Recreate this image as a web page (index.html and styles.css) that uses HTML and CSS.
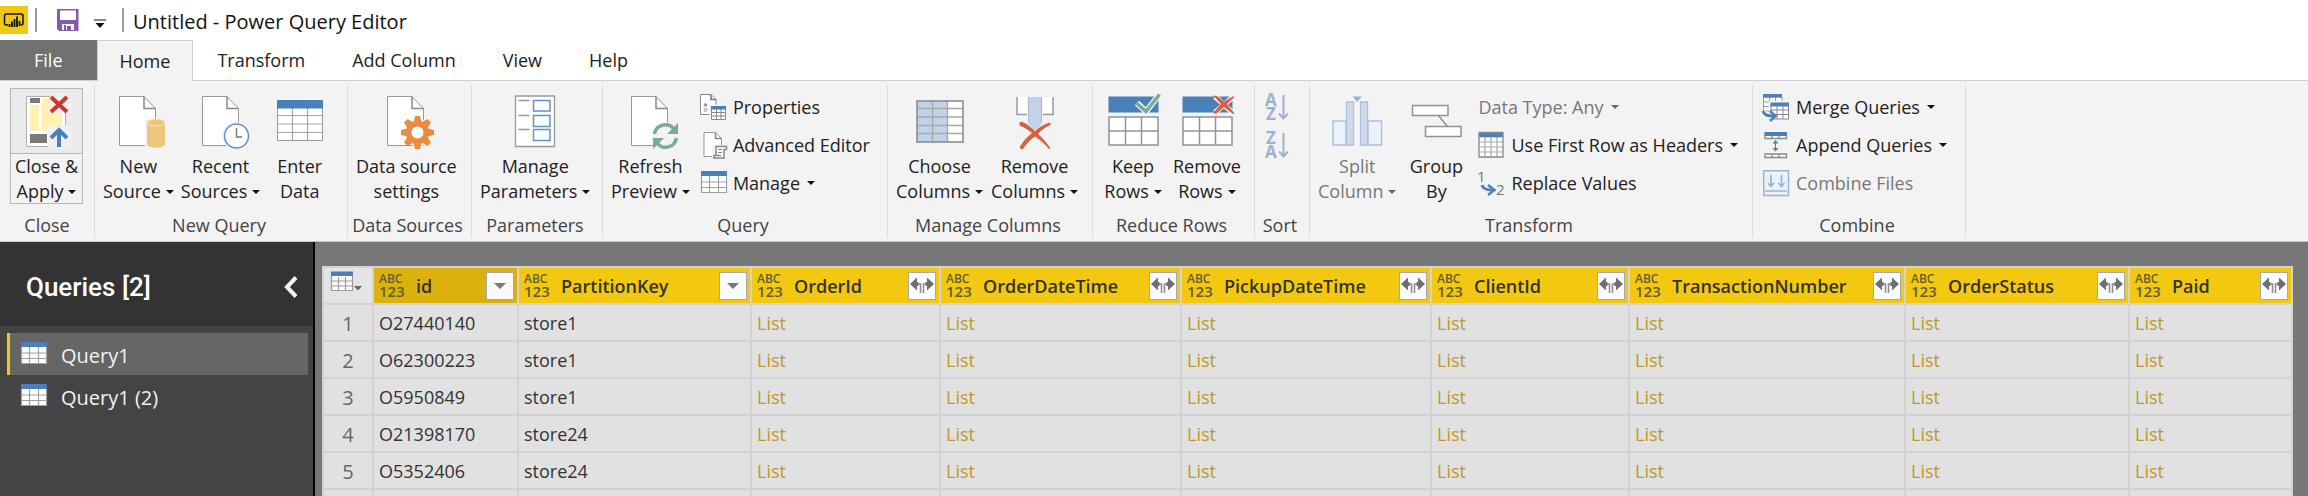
FILE: index.html
```html
<!DOCTYPE html>
<html lang="en">
<head>
<meta charset="utf-8">
<title>Untitled - Power Query Editor</title>
<link rel="stylesheet" href="styles.css">
</head>
<body>
<svg class="defs" width="0" height="0" aria-hidden="true">
  <symbol id="doc" viewBox="0 0 56 56">
    <path d="M9.500 3.500H34L45.500 15.500V52.500H9.500Z" fill="#fff" stroke="#999"/>
    <path d="M34 3.500V15.500H45.500" fill="none" stroke="#888" stroke-width="1.500"/>
  </symbol>
  <symbol id="grid" viewBox="0 0 28 28">
    <path d="M1 3H27V24H1Z" fill="#fff"/>
    <path d="M1.500 6V23.500H26.500V6M1 13H27M1 18.500H27M9.500 7V24M18.500 7V24" fill="none" stroke="#a0a0a0" stroke-width="1.200"/>
    <path d="M1 2H27V7H1Z" fill="#4a80ba"/>
  </symbol>
  <symbol id="expand" viewBox="0 0 26 26">
    <path d="M1 11L8 4.500V9H9.500V13H8V17.500ZM25 11L18 4.500V9H16.500V13H18V17.500Z" fill="#6f6f6f"/>
    <path d="M9 11H11.500V20M17 11H14.500V20" fill="none" stroke="#8a8a8a" stroke-width="1.500"/>
  </symbol>
</svg>

<header class="titlebar">
  <svg class="logo" width="28" height="28" viewBox="0 0 28 28"><path d="M0 0H28V28H0Z" fill="#f2c811"/><path d="M8 19H6.500A2 2 0 0 1 4.500 17V10A2 2 0 0 1 6.500 8H21A2 2 0 0 1 23 10V17A2 2 0 0 1 21 19H20.500" fill="none" stroke="#111" stroke-width="1.500"/><path d="M9.500 18V21M12 15.500V21M14.500 13V21M17 10.500V21M19.500 15V20" stroke="#111" stroke-width="1.800"/></svg>
  <span class="bar"></span>
  <button class="quick save" aria-label="Save"><svg width="24" height="24" viewBox="0 0 24 24"><path d="M1.500 1H22.500V23H3L1 21V1Z" fill="#8858ab"/><path d="M4 2.500H20V12H4Z" fill="#fff"/><path d="M6 16H18V22H15V18H11V22H6Z" fill="#fff"/><path d="M8 17H10V22H8Z" fill="#8858ab"/></svg></button>
  <button class="quick more" aria-label="Customize toolbar"><svg width="12" height="10" viewBox="0 0 12 10"><path d="M0 0.500H12V1.500H0ZM1.500 4H10.500L6 9Z" fill="#111"/></svg></button>
  <span class="bar"></span>
  <h1 class="title">Untitled - Power Query Editor</h1>
</header>

<nav class="tabs">
  <button class="tab file">File</button>
  <button class="tab active">Home</button>
  <button class="tab">Transform</button>
  <button class="tab">Add Column</button>
  <button class="tab">View</button>
  <button class="tab">Help</button>
</nav>

<section class="ribbon">
  <div class="group g-close">
    <div class="tools">
      <button class="big split">
        <span class="pic"><svg width="56" height="56" viewBox="0 0 56 56"><path d="M7.500 3.500H46.500V53.500H7.500Z" fill="#fff" stroke="#b0b0b0"/><path d="M11 12H20V38H11ZM23 5H34V19H43V32L36 38H23Z" fill="#fff0b3"/><path d="M11 5H21V10H11ZM11 41H28V50H11Z" fill="#7a7a7a"/><path d="M31 0H54V20H31ZM29 32H54V56H29Z" fill="#f0f0f0" opacity=".9"/><path d="M32 4L48 19M48 4L32 19" stroke="#cf3434" stroke-width="4"/><path d="M40 54V38M32 45L40 37L48 45" fill="none" stroke="#4a80ba" stroke-width="4"/></svg></span>
        <span class="cap">Close &amp;<br>Apply<i class="dd"></i></span>
      </button>
    </div>
    <div class="name">Close</div>
  </div>

  <div class="group g-new">
    <div class="tools">
      <button class="big">
        <svg width="56" height="56" viewBox="0 0 56 56"><use href="#doc"/><path d="M35 27H56V56H35Z" fill="#f3f3f3"/><path d="M37 30V51C37 56 55 56 55 51V30Z" fill="#eec77e"/><ellipse cx="46" cy="29.500" rx="9" ry="3.500" fill="#eec77e" stroke="#f8e6c4"/></svg>
        <span class="cap">New<br>Source<i class="dd"></i></span>
      </button>
      <button class="big">
        <svg width="56" height="56" viewBox="0 0 56 56"><use href="#doc"/><circle cx="43.500" cy="43" r="14" fill="#f3f3f3"/><circle cx="43.500" cy="43" r="12" fill="#fff" stroke="#5f93c8" stroke-width="1.500"/><path d="M43.500 35V44H49" fill="none" stroke="#777" stroke-width="1.500"/></svg>
        <span class="cap">Recent<br>Sources<i class="dd"></i></span>
      </button>
      <button class="big">
        <svg width="56" height="56" viewBox="0 0 56 56"><path d="M5.500 8.500H50.500V47.500H5.500Z" fill="#fff" stroke="#999"/><path d="M5 22.500H51M5 31H51M5 39.500H51M20.500 15V48M35.500 15V48" stroke="#a5a5a5" stroke-width="1.200"/><path d="M5 7H51V15.500H5Z" fill="#4a80ba"/></svg>
        <span class="cap">Enter<br>Data</span>
      </button>
    </div>
    <div class="name">New Query</div>
  </div>

  <div class="group g-data">
    <div class="tools">
      <button class="big">
        <svg width="56" height="56" viewBox="0 0 56 56"><use href="#doc"/><circle cx="39.500" cy="39.500" r="14" fill="#f3f3f3"/><g fill="#e78c42" transform="translate(39.500 39.500)"><path d="M-4-10L-2.500-16.500H2.500L4-10V10L2.500 16.500H-2.500L-4 10Z"/><path d="M-4-10L-2.500-16.500H2.500L4-10V10L2.500 16.500H-2.500L-4 10Z" transform="rotate(45)"/><path d="M-4-10L-2.500-16.500H2.500L4-10V10L2.500 16.500H-2.500L-4 10Z" transform="rotate(90)"/><path d="M-4-10L-2.500-16.500H2.500L4-10V10L2.500 16.500H-2.500L-4 10Z" transform="rotate(135)"/><circle r="11.500"/><circle r="6" fill="#fff"/></g></svg>
        <span class="cap">Data source<br>settings</span>
      </button>
    </div>
    <div class="name">Data Sources</div>
  </div>

  <div class="group g-param">
    <div class="tools">
      <button class="big">
        <svg width="56" height="56" viewBox="0 0 56 56"><path d="M8.500 3H47.500V53.500H8.500Z" fill="#fff" stroke="#999" stroke-width="1.300"/><path d="M11.500 7.500H22.500M11.500 22.500H22.500M11.500 36.500H22.500" stroke="#999" stroke-width="1.300"/><path d="M26.500 7.500H43V18H26.500ZM26.500 22.500H43V33.500H26.500ZM26.500 36.500H43V47.500H26.500Z" fill="#fff" stroke="#5f93c8" stroke-width="1.500"/></svg>
        <span class="cap">Manage<br>Parameters<i class="dd"></i></span>
      </button>
    </div>
    <div class="name">Parameters</div>
  </div>

  <div class="group g-query">
    <div class="tools">
      <button class="big">
        <svg width="56" height="56" viewBox="0 0 56 56"><use href="#doc"/><circle cx="43.500" cy="43" r="14" fill="#f3f3f3"/><path d="M32.500 41A11 11 0 0 1 52 36M54.500 45A11 11 0 0 1 35 50" fill="none" stroke="#79aa97" stroke-width="3.500"/><path d="M56 30V41H45ZM31 56V45H42Z" fill="#79aa97"/></svg>
        <span class="cap">Refresh<br>Preview<i class="dd"></i></span>
      </button>
      <div class="stack">
        <button class="small"><svg width="28" height="28" viewBox="0 0 28 28"><path d="M.5 1.500H11L16 6.500V21.500H.5Z" fill="#fff" stroke="#888"/><path d="M11 1.500V6.500H16" fill="none" stroke="#777" stroke-width="1.500"/><circle cx="5.500" cy="12" r="1.800" fill="#999"/><circle cx="5.500" cy="17" r="1.500" fill="#fff" stroke="#999"/><path d="M9.500 11.500H27.500V28H9.500Z" fill="#f3f3f3"/><path d="M11.500 16V26.500H25.500V16M11 19.500H26M11 23H26M16.500 16V27M21 16V27" fill="#fff" stroke="#888"/><path d="M11 13H26V16.500H11Z" fill="#4a80ba"/></svg>Properties</button>
        <button class="small"><svg width="28" height="28" viewBox="0 0 28 28"><path d="M4 1.500H15.500L21.500 7.500V25.500H4Z" fill="#fff" stroke="#999"/><path d="M15.500 1.500V7.500H21.500" fill="none" stroke="#888" stroke-width="1.500"/><path d="M12 14H28V28H12Z" fill="#f3f3f3"/><path d="M16 25V15.500H26.500V18.500H24V27H14V24.500H21" fill="#fff" stroke="#888" stroke-width="1.500"/><path d="M18 18.500H22M18 21.500H22" stroke="#888"/></svg>Advanced Editor</button>
        <button class="small"><svg width="28" height="28"><use href="#grid"/></svg>Manage<i class="dd"></i></button>
      </div>
    </div>
    <div class="name">Query</div>
  </div>

  <div class="group g-cols">
    <div class="tools">
      <button class="big">
        <svg width="56" height="56" viewBox="0 0 56 56"><path d="M5 8H51V49H5Z" fill="#fff"/><path d="M5 8H35.500V49H5Z" fill="#c0d3e8"/><path d="M5 15.500H51M5 24H51M5 32.500H51M5 40.500H51M20.500 8V49M35.500 8V49" stroke="#a8a8a8" stroke-width="1.300"/><path d="M5 8H51V49H5Z" fill="none" stroke="#888" stroke-width="1.500"/></svg>
        <span class="cap">Choose<br>Columns<i class="dd"></i></span>
      </button>
      <button class="big">
        <svg width="56" height="56" viewBox="0 0 56 56"><path d="M10 4V21.500H20V4M46 4V21.500H36V4" fill="#fff"/><path d="M10 4V21.500H20M46 4V21.500H36" fill="none" stroke="#999" stroke-width="1.500"/><path d="M21.500 4H34.500V31L28 37L21.500 31Z" fill="#c0d3e8"/><path d="M21.500 4V29M34.500 4V29" stroke="#b0b8c2"/><path d="M14 28.500C19 30 24 34 28 38C33 33 38 31 43 29.500L44 31.500C39 34 34 37 31 41C36 45 40 50 43.500 55.500L42 56C38 51 33 47 28 43.500C23 47 19 51 16 56C13 57 12 54 14 52C17 47 21 43 25 40C21 37 17 34 13 33C12 31 12 29 14 28.500Z" fill="#da6043"/></svg>
        <span class="cap">Remove<br>Columns<i class="dd"></i></span>
      </button>
    </div>
    <div class="name">Manage Columns</div>
  </div>

  <div class="group g-rows">
    <div class="tools">
      <button class="big">
        <svg width="56" height="56" viewBox="0 0 56 56"><path d="M3.500 3.500H53.500V19.500H3.500Z" fill="#4a80ba"/><path d="M4 24H53V52H4ZM4 38H53M20.500 24V52M36.500 24V52" fill="#fff" stroke="#929292" stroke-width="1.500"/><path d="M32 10L41 18.500L54 2" fill="none" stroke="#f3f3f3" stroke-width="6"/><path d="M32 10.500L41 18.500L54.500 1.500" fill="none" stroke="#79aa97" stroke-width="3.500"/></svg>
        <span class="cap">Keep<br>Rows<i class="dd"></i></span>
      </button>
      <button class="big">
        <svg width="56" height="56" viewBox="0 0 56 56"><path d="M3.500 3.500H53.500V19.500H3.500Z" fill="#4a80ba"/><path d="M4 24H53V52H4ZM4 38H53M20.500 24V52M36.500 24V52" fill="#fff" stroke="#929292" stroke-width="1.500"/><path d="M36 3.500L54 20M54 4L36 19.500" stroke="#f3f3f3" stroke-width="5.500"/><path d="M34 2.500L38 3L45 8.500L54.500 3L55 4.500L48 11L55.500 20.500L54 21L45 14L37 21L34 20L42 11Z" fill="#da6043"/></svg>
        <span class="cap">Remove<br>Rows<i class="dd"></i></span>
      </button>
    </div>
    <div class="name">Reduce Rows</div>
  </div>

  <div class="group g-sort">
    <div class="tools">
      <div class="stack">
        <button class="small" disabled aria-label="Sort ascending"><svg class="az" width="28" height="28" viewBox="0 0 28 28"><text x="0" y="13">A</text><text x="1" y="27">Z</text><path d="M18.500 2V25M14 20.500L18.500 25.500L23 20.500" fill="none" stroke="#9fb0d0" stroke-width="2"/></svg></button>
        <button class="small" disabled aria-label="Sort descending"><svg class="az" width="28" height="28" viewBox="0 0 28 28"><text x="1" y="13">Z</text><text x="0" y="27">A</text><path d="M18.500 2V25M14 20.500L18.500 25.500L23 20.500" fill="none" stroke="#9fb0d0" stroke-width="2"/></svg></button>
      </div>
    </div>
    <div class="name">Sort</div>
  </div>

  <div class="group g-trans">
    <div class="tools">
      <button class="big" disabled>
        <svg width="56" height="56" viewBox="0 0 56 56"><path d="M4 28H17V52H4ZM39 28H52.500V52H39Z" fill="#eaf2ff" stroke="#b0c1dc" stroke-width="1.500"/><path d="M17.500 9H24.500V52H17.500ZM31.500 9H38.500V52H31.500Z" fill="#cfdaea" stroke="#b0c1dc" stroke-width="1.300"/><path d="M23.500 3.500H33L28 9Z" fill="#9fb0d0"/></svg>
        <span class="cap">Split<br>Column<i class="dd"></i></span>
      </button>
      <button class="big">
        <svg width="56" height="56" viewBox="0 0 56 56"><path d="M30 22L39.500 33.500" stroke="#888" stroke-width="1.300"/><path d="M4.500 12.500H40V22.500H4.500ZM17.500 33.500H53V43.500H17.500Z" fill="#fff" stroke="#929292" stroke-width="1.500"/></svg>
        <span class="cap">Group<br>By</span>
      </button>
      <div class="stack">
        <button class="small" disabled>Data Type: Any<i class="dd"></i></button>
        <button class="small"><svg width="28" height="28" viewBox="0 0 28 28"><path d="M1 2H25V26H1Z" fill="#fff"/><path d="M1 6H25M1 11H25M1 16H25M1 21H25M7 2V26M13 2V26M19 2V26" stroke="#aaa" stroke-width="1.200"/><path d="M1 1.500H25V6H1Z" fill="#4a80ba"/><path d="M1 1.500H25V26H1Z" fill="none" stroke="#888" stroke-width="1.300"/></svg>Use First Row as Headers<i class="dd"></i></button>
        <button class="small"><svg class="num" width="28" height="28" viewBox="0 0 28 28"><text x="-1" y="13">1</text><text x="18" y="26">2</text><path d="M4 16C5 20 8 21 14 21" fill="none" stroke="#4a80ba" stroke-width="3"/><path d="M10 16L16.500 21L10 26" fill="none" stroke="#4a80ba" stroke-width="2.500"/></svg>Replace Values</button>
      </div>
    </div>
    <div class="name">Transform</div>
  </div>

  <div class="group g-comb">
    <div class="tools">
      <div class="stack">
        <button class="small"><svg width="28" height="28" viewBox="0 0 28 28"><path d="M.5 4H19V18H.5ZM.5 9H19M.5 13.500H19M6.500 4V18M12.500 4V18" fill="#fff" stroke="#999"/><path d="M0 1H19V4.500H0Z" fill="#4a80ba"/><path d="M6 8H28V28H6Z" fill="#f3f3f3"/><path d="M8 11H25.500V26H8ZM8 17H25.500M8 21.500H25.500M14 11V26M20 11V26" fill="#fff" stroke="#888"/><path d="M7.500 9.500H26V13.500H7.500Z" fill="#4a80ba"/><path d="M0 18C1 22 4 23 10 23" fill="none" stroke="#f3f3f3" stroke-width="6"/><path d="M0 18C1 22 4 23 11 23" fill="none" stroke="#4a80ba" stroke-width="3"/><path d="M7 18L12.500 23L7 28" fill="none" stroke="#4a80ba" stroke-width="2.500"/></svg>Merge Queries<i class="dd"></i></button>
        <button class="small"><svg width="28" height="28" viewBox="0 0 28 28"><path d="M2 4H23.500V7.500H2ZM2 23H23.500V26.500H2ZM9 4V7.500M16 4V7.500M9 23V26.500M16 23V26.500" fill="#fff" stroke="#888" stroke-width="1.300"/><path d="M1.500 1H24V5H1.500Z" fill="#4a80ba"/><path d="M12.500 9L15.500 12.500H13V17H15.500L12.500 20.500L9.500 17H12V12.500H9.500Z" fill="#4a80ba"/></svg>Append Queries<i class="dd"></i></button>
        <button class="small" disabled><svg width="28" height="28" viewBox="0 0 28 28"><path d="M.7 1.700H25.500V26.500H.7Z" fill="#e9f1fd" stroke="#9fb0d0" stroke-width="1.500"/><path d="M2 22H24M8 6V17M5 14L8 17.500L11 14M18.500 6V17M15.500 14L18.500 17.500L21.500 14" fill="none" stroke="#9fb0d0" stroke-width="1.700"/></svg>Combine Files</button>
      </div>
    </div>
    <div class="name">Combine</div>
  </div>
</section>

<main class="work">
  <aside class="side">
    <div class="side-head">
      <h2>Queries [2]</h2>
      <button aria-label="Collapse queries pane"><svg width="14" height="22" viewBox="0 0 14 22"><path d="M12 1.500L3 11L12 20.500" fill="none" stroke="#f3f3f3" stroke-width="4"/></svg></button>
    </div>
    <div class="list">
      <button class="query selected"><svg width="28" height="28"><use href="#grid"/></svg><span>Query1</span></button>
      <button class="query"><svg width="28" height="28"><use href="#grid"/></svg><span>Query1 (2)</span></button>
    </div>
  </aside>

  <div class="sheet">
    <table>
      <colgroup><col class="c0"><col class="c1"><col class="c2"><col class="c3"><col class="c4"><col class="c5"><col class="c6"><col class="c7"><col class="c8"><col class="c9"></colgroup>
      <thead>
        <tr>
          <th class="corner"><button aria-label="Table options"><svg width="34" height="28" viewBox="0 0 34 28"><path d="M2 4H24V22H2Z" fill="#fff"/><path d="M2.500 6V21.500H23.500V6M2 12H24M2 17H24M9.500 8V22M16.500 8V22" fill="none" stroke="#999" stroke-width="1.200"/><path d="M2 2.500H24V7H2Z" fill="#4a80ba"/><path d="M25 17H33L29 21.500Z" fill="#666"/></svg></button></th>
          <th class="picked"><div class="head"><span class="type">ABC<b>123</b></span><span class="label">id</span><button aria-label="Filter id"><i class="dd"></i></button></div></th>
          <th><div class="head"><span class="type">ABC<b>123</b></span><span class="label">PartitionKey</span><button aria-label="Filter PartitionKey"><i class="dd"></i></button></div></th>
          <th><div class="head"><span class="type">ABC<b>123</b></span><span class="label">OrderId</span><button aria-label="Expand OrderId"><svg width="26" height="26"><use href="#expand"/></svg></button></div></th>
          <th><div class="head"><span class="type">ABC<b>123</b></span><span class="label">OrderDateTime</span><button aria-label="Expand OrderDateTime"><svg width="26" height="26"><use href="#expand"/></svg></button></div></th>
          <th><div class="head"><span class="type">ABC<b>123</b></span><span class="label">PickupDateTime</span><button aria-label="Expand PickupDateTime"><svg width="26" height="26"><use href="#expand"/></svg></button></div></th>
          <th><div class="head"><span class="type">ABC<b>123</b></span><span class="label">ClientId</span><button aria-label="Expand ClientId"><svg width="26" height="26"><use href="#expand"/></svg></button></div></th>
          <th><div class="head"><span class="type">ABC<b>123</b></span><span class="label">TransactionNumber</span><button aria-label="Expand TransactionNumber"><svg width="26" height="26"><use href="#expand"/></svg></button></div></th>
          <th><div class="head"><span class="type">ABC<b>123</b></span><span class="label">OrderStatus</span><button aria-label="Expand OrderStatus"><svg width="26" height="26"><use href="#expand"/></svg></button></div></th>
          <th><div class="head"><span class="type">ABC<b>123</b></span><span class="label">Paid</span><button aria-label="Expand Paid"><svg width="26" height="26"><use href="#expand"/></svg></button></div></th>
        </tr>
      </thead>
      <tbody>
        <tr><th scope="row">1</th><td>O27440140</td><td>store1</td><td><a href="#">List</a></td><td><a href="#">List</a></td><td><a href="#">List</a></td><td><a href="#">List</a></td><td><a href="#">List</a></td><td><a href="#">List</a></td><td><a href="#">List</a></td></tr>
        <tr><th scope="row">2</th><td>O62300223</td><td>store1</td><td><a href="#">List</a></td><td><a href="#">List</a></td><td><a href="#">List</a></td><td><a href="#">List</a></td><td><a href="#">List</a></td><td><a href="#">List</a></td><td><a href="#">List</a></td></tr>
        <tr><th scope="row">3</th><td>O5950849</td><td>store1</td><td><a href="#">List</a></td><td><a href="#">List</a></td><td><a href="#">List</a></td><td><a href="#">List</a></td><td><a href="#">List</a></td><td><a href="#">List</a></td><td><a href="#">List</a></td></tr>
        <tr><th scope="row">4</th><td>O21398170</td><td>store24</td><td><a href="#">List</a></td><td><a href="#">List</a></td><td><a href="#">List</a></td><td><a href="#">List</a></td><td><a href="#">List</a></td><td><a href="#">List</a></td><td><a href="#">List</a></td></tr>
        <tr><th scope="row">5</th><td>O5352406</td><td>store24</td><td><a href="#">List</a></td><td><a href="#">List</a></td><td><a href="#">List</a></td><td><a href="#">List</a></td><td><a href="#">List</a></td><td><a href="#">List</a></td><td><a href="#">List</a></td></tr>
        <tr><th scope="row"></th><td></td><td></td><td></td><td></td><td></td><td></td><td></td><td></td><td></td></tr>
      </tbody>
    </table>
  </div>
</main>
</body>
</html>
```

FILE: styles.css
```css
* { box-sizing: border-box; }

body {
  margin: 0;
  height: 100vh;
  display: flex;
  flex-direction: column;
  overflow: hidden;
  background: #fff;
  color: #222;
  font: 18px/25px "Open Sans", "Noto Sans", sans-serif;
}

button {
  margin: 0;
  padding: 0;
  border: 0;
  background: none;
  color: inherit;
  font: inherit;
  white-space: nowrap;
}

svg { display: block; flex: none; overflow: visible; }
.defs { position: absolute; }

/* Down-pointing arrow after a label */
.dd {
  display: inline-block;
  margin-left: 5px;
  vertical-align: 4px;
  border: 4px solid transparent;
  border-top-color: #111;
  border-bottom: 0;
}

/* Title bar */
.titlebar { display: flex; align-items: center; height: 40px; flex: none; }
.bar { width: 2px; height: 24px; margin-left: 7px; background: #999; }
.save { margin-left: 19px; }
.more { margin: 8px 9px 0 14px; }
.title { margin: 0 0 0 9px; padding-top: 3px; font-size: 20px; font-weight: 400; color: #111; }

/* Tabs */
.tabs { display: flex; height: 41px; flex: none; border-bottom: 1px solid #cfcfcf; }
.tab { padding: 0 24px; height: 41px; }
.tab + .tab + .tab { padding: 0 23px 0 24px; }
.tab.file { padding: 0 34px; height: 40px; background: #717171; color: #fff; }
.tab.active { padding: 0 22px; border: 1px solid #cfcfcf; border-bottom: 0; background: #f3f3f3; }

/* Ribbon */
.ribbon { display: flex; flex: none; padding: 4px 0 3px; background: #f3f3f3; border-bottom: 1px solid #c8c8c8; }
.group { display: flex; flex-direction: column; flex: none; padding: 3px 0 0 4px; border-right: 1px solid #dcdcdc; }
.tools { display: flex; height: 116px; }
.name { margin: 9px 8px 0 0; text-align: center; color: #444; }
.g-close { width: 95px; padding-left: 10px; }
.g-close .name { margin-right: 10px; }
.g-new { width: 253px; }
.g-data { width: 124px; }
.g-param { width: 131px; }
.g-query { width: 285px; }
.g-cols { width: 205px; }
.g-rows { width: 162px; }
.g-sort { width: 55px; }
.g-trans { width: 443px; }
.g-comb { width: 213px; }

.big { display: flex; flex-direction: column; align-items: center; gap: 5px; min-width: 72px; padding: 5px 4px 0; }
.g-new .big { padding: 5px 3px 0 4px; }
.big.split { gap: 0; width: 73px; padding: 0; border: 1px solid #b8b8b8; }
.split .pic { align-self: stretch; display: flex; justify-content: center; padding: 4px 0; background: #eaeaea; border-bottom: 1px solid #b8b8b8; }
.stack { display: flex; flex-direction: column; padding-left: 6px; }
.small { display: flex; align-items: center; gap: 5px; height: 38px; }
.small .dd { margin-left: 2px; }
button:disabled { color: #777; }
button:disabled .dd { border-top-color: #666; }
.az text { font: 700 17px "Open Sans", sans-serif; fill: #9fb0d0; }
.num text { font: 15px "Open Sans", sans-serif; fill: #777; }

/* Workspace */
.work { display: flex; flex: 1; min-height: 0; overflow: hidden; background: #777; }
.side { width: 315px; flex: none; background: #444; border-right: 2px solid #000; color: #f3f3f3; }
.side-head { display: flex; align-items: center; justify-content: space-between; height: 84px; padding: 5px 15px 0 26px; background: #333; }
.side-head h2 { margin: 0; font: 500 26px/30px Roboto, sans-serif; color: #fff; }
.list { display: flex; flex-direction: column; padding: 7px 5px 0 7px; }
.query { display: flex; align-items: center; gap: 13px; height: 42px; padding: 0 10px; border-left: 3px solid transparent; font-size: 20px; }
.query span { padding-top: 3px; }
.query.selected { background: #666; border-color: #f2c811; }

.sheet { flex: 1; min-width: 0; overflow: hidden; padding: 24px 16px 0 7px; }
table { width: 100%; table-layout: fixed; border-collapse: collapse; background: #e1e1e1; }
th, td { height: 37px; padding: 1px 0 0 5px; border: 2px solid #d3d3d3; text-align: left; color: #333; white-space: nowrap; }
tbody th { padding: 1px 0 0; text-align: center; font-weight: 400; font-size: 20px; color: #666; }
thead th { padding-top: 0; background: #f2c811; }
thead .corner { padding: 0 0 0 5px; background: #e4e4e4; }
thead .picked { background: #dab10d; }
td a { color: #bd992b; text-decoration: none; }
.head { display: flex; align-items: center; height: 35px; padding-right: 3px; }
.type { width: 37px; font: 600 12px/12px "Open Sans", sans-serif; color: #665c33; }
.type b { display: block; font: 600 15px/13px "Open Sans", sans-serif; }
.label { flex: 1; padding-top: 2px; font-weight: 600; }
.head button { display: flex; align-items: center; justify-content: center; width: 28px; height: 28px; border: 1px solid #a3a8b5; background: #fafafa; }
.head .dd { margin: 0; border-width: 6px 6px 0; border-top-color: #777; }
.c0 { width: 50px; }
.c1 { width: 145px; }
.c2 { width: 233px; }
.c3 { width: 189px; }
.c4 { width: 241px; }
.c5 { width: 250px; }
.c6 { width: 198px; }
.c7 { width: 276px; }
.c8 { width: 224px; }
.c9 { width: 163px; }
```
